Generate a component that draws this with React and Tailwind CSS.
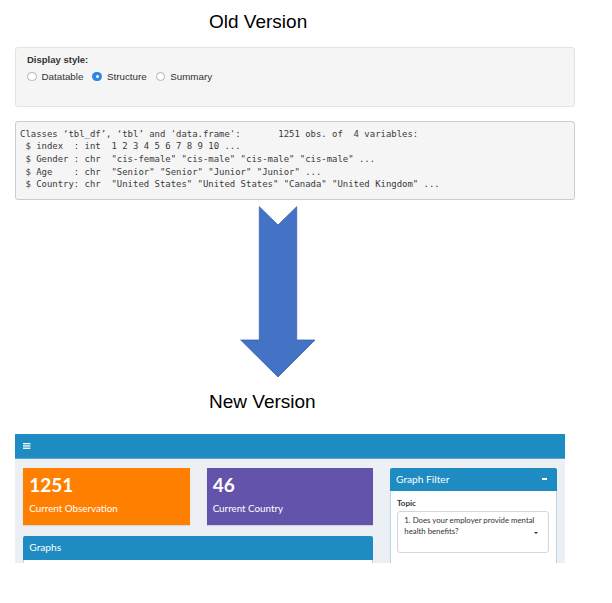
import React from 'react';

const codeLines = [
  "Classes \u2018tbl_df\u2019, \u2018tbl\u2019 and 'data.frame':       1251 obs. of  4 variables:",
  ' $ index  : int  1 2 3 4 5 6 7 8 9 10 ...',
  ' $ Gender : chr  "cis-female" "cis-male" "cis-male" "cis-male" ...',
  ' $ Age    : chr  "Senior" "Senior" "Junior" "Junior" ...',
  ' $ Country: chr  "United States" "United States" "Canada" "United Kingdom" ...',
];

const Radio = ({ label, checked }) => (
  <div className="flex items-center">
    {checked ? (
      <span className="w-[9.5px] h-[9.5px] rounded-full bg-[#2f86e6] flex items-center justify-center">
        <span className="w-[3px] h-[3px] rounded-full bg-white" />
      </span>
    ) : (
      <span className="w-[9.5px] h-[9.5px] rounded-full bg-white border border-[#b3b3b3]" />
    )}
    <span className="ml-[5px] text-[9.8px] leading-[12px] text-[#333]">{label}</span>
  </div>
);

const StatBox = ({ value, label, color }) => (
  <div className={`h-[57.3px] pl-[6px] pt-[5.3px] text-white shadow-[0_1px_1px_rgba(0,0,0,0.1)] ${color}`}>
    <div className="text-[19px] leading-[23px] font-bold">{value}</div>
    <div className="mt-[5.8px] text-[9.8px] leading-[13px]">{label}</div>
  </div>
);

export default function App() {
  return (
    <div className="w-[612px] h-[603px] bg-white overflow-hidden font-['Liberation_Sans',Arial,sans-serif]">
      <div className="pl-[209px] pt-[11px] text-[19px] leading-[22px] text-black">Old Version</div>

      {/* old well panel */}
      <div className="ml-[15px] mt-[14px] w-[560px] h-[60px] bg-[#f5f5f5] border border-[#e3e3e3] rounded-[3px] pl-[11px] pt-[6px]">
        <div className="text-[9.5px] leading-[12px] font-bold text-[#333]">Display style:</div>
        <div className="mt-[4.7px] flex items-center gap-[9px]">
          <Radio label="Datatable" />
          <Radio label="Structure" checked />
          <Radio label="Summary" />
        </div>
      </div>

      {/* str() output */}
      <div className="ml-[15px] mt-[14px] w-[560px] h-[79px] bg-[#f5f5f5] border border-[#cccccc] rounded-[3px] pl-[4px] pt-[5.5px] font-['DejaVu_Sans_Mono','Liberation_Mono',monospace] text-[8.95px] leading-[12.7px] text-[#3a3a3a]">
        {codeLines.map((l, i) => (
          <div key={i} className="whitespace-pre">{l}</div>
        ))}
      </div>

      <svg className="block ml-[238px] mt-[4px]" width="80" height="176" viewBox="0 0 80 176">
        <polygon
          points="21.3,2.7 40,21 58.7,2.7 58.7,136 77,136 40,173 2.7,136 21.3,136"
          fill="#4472c4"
          stroke="#3a63ad"
          strokeWidth="0.8"
        />
      </svg>

      <div className="pl-[209px] mt-[11.3px] text-[19px] leading-[22px] text-black">New Version</div>

      {/* new dashboard */}
      <div className="ml-[15px] mt-[20.7px] w-[550px] font-['Lato','Open_Sans',sans-serif]">
        <div className="h-[25px] bg-[#1e8bc3] border-b border-[#5aa6d3] pl-[8.3px] pt-[8.7px]">
          <svg width="8" height="6" viewBox="0 0 8 6" className="block">
            <rect x="0" y="0" width="7.4" height="1.3" fill="#fff" />
            <rect x="0" y="2.3" width="7.4" height="1.3" fill="#fff" />
            <rect x="0" y="4.6" width="7.4" height="1.3" fill="#fff" />
          </svg>
        </div>
        <div className="h-[104px] bg-[#ecf0f5] overflow-hidden px-[8.3px] pt-[8.7px] grid grid-cols-3 gap-x-[16.7px] items-start">
          <div className="col-span-2">
            <div className="grid grid-cols-2 gap-x-[16.7px]">
              <StatBox value="1251" label="Current Observation" color="bg-[#ff8000]" />
              <StatBox value="46" label="Current Country" color="bg-[#6453ab]" />
            </div>
            <div className="mt-[11px]">
              <div className="h-[24px] bg-[#1e8bc3] rounded-t-[2px] pl-[6px] flex items-center text-white text-[10.2px]">Graphs</div>
              <div className="h-[40px] bg-white border-x border-[#b6d7ea]" />
            </div>
          </div>
          <div>
            <div className="h-[23px] bg-[#1e8bc3] rounded-t-[2px] pl-[6px] pr-[10px] flex items-center justify-between text-white text-[10.2px]">
              <span>Graph Filter</span>
              <span className="block w-[5px] h-[1.6px] bg-white" />
            </div>
            <div className="h-[80px] bg-white border-x border-[#b6d7ea] pl-[6px] pr-[6.6px] pt-[7.5px]">
              <div className="text-[8px] leading-[11px] font-bold text-[#333]">Topic</div>
              <div className="relative mt-[1.8px] h-[41.7px] border border-[#d2d6de] rounded-[3px] bg-white pl-[6.3px] pt-[2.9px]">
                <div className="w-[132px] text-[7.8px] leading-[11.6px] text-[#333]">
                  1. Does your employer provide mental health benefits?
                </div>
                <span className="absolute right-[10px] top-[19.8px] w-0 h-0 border-l-[2.2px] border-r-[2.2px] border-t-[2.6px] border-l-transparent border-r-transparent border-t-[#333]" />
              </div>
            </div>
          </div>
        </div>
      </div>
    </div>
  );
}
